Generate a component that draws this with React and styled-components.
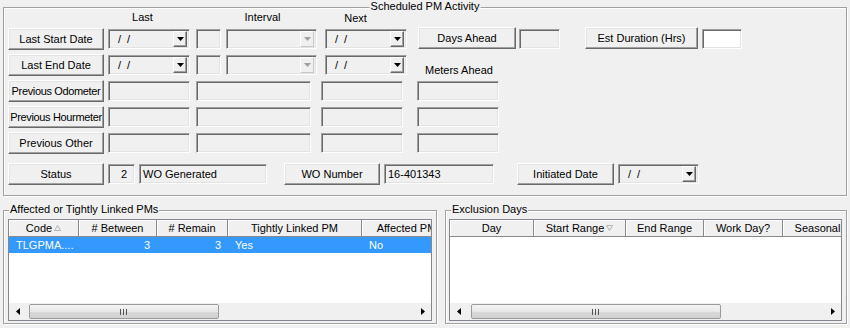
import React from "react";
import styled, { createGlobalStyle } from "styled-components";

const GlobalStyle = createGlobalStyle`
  html, body {
    margin: 0;
    padding: 0;
    background: #f0f0f0;
  }
  body {
    font-family: "Liberation Sans", Arial, sans-serif;
    font-size: 11px;
    color: #000;
  }
  * {
    box-sizing: border-box;
  }
`;

const affectedCols = [
  { label: "Code", w: 70, sort: "up" },
  { label: "# Between", w: 78 },
  { label: "# Remain", w: 71 },
  { label: "Tightly Linked PM", w: 134 },
  { label: "Affected PM", w: 90 },
];

const exclusionCols = [
  { label: "Day", w: 84 },
  { label: "Start Range", w: 92, sort: "down" },
  { label: "End Range", w: 78 },
  { label: "Work Day?", w: 79 },
  { label: "Seasonal", w: 70 },
];

const affectedRows = [
  [
    { text: "TLGPMA....", align: "left" },
    { text: "3", align: "right" },
    { text: "3", align: "right" },
    { text: "Yes", align: "left" },
    { text: "No", align: "left" },
  ],
];

function Arrow({ dir, disabled }) {
  // little windows style triangle
  const pts = {
    down: "0,0 7,0 3.5,4",
    left: "4,0 4,7 0,3.5",
    right: "0,0 0,7 4,3.5",
  }[dir];
  const size = dir === "down" ? [7, 4] : [4, 7];
  return (
    <svg width={size[0]} height={size[1]} viewBox={`0 0 ${size[0]} ${size[1]}`}>
      <polygon points={pts} fill={disabled ? "#a0a0a0" : "#000"} />
    </svg>
  );
}

function SortMark({ dir }) {
  const pts = dir === "up" ? "0.5,5.5 6.5,5.5 3.5,0.5" : "0.5,0.5 6.5,0.5 3.5,5.5";
  return (
    <svg width="7" height="6" viewBox="0 0 7 6">
      <polygon points={pts} fill="none" stroke="#b4b4b4" strokeWidth="1" />
    </svg>
  );
}

function Grip() {
  return (
    <svg width="8" height="6" viewBox="0 0 8 6">
      <rect x="0" y="0" width="1" height="6" fill="#555" />
      <rect x="3" y="0" width="1" height="6" fill="#555" />
      <rect x="6" y="0" width="1" height="6" fill="#555" />
    </svg>
  );
}

function ComboBox({ w, ml, value, disabled }) {
  return (
    <Combo $w={w} $ml={ml}>
      <ComboText>{value}</ComboText>
      <DropBtn $disabled={disabled}>
        <Arrow dir="down" disabled={disabled} />
      </DropBtn>
    </Combo>
  );
}

function ListGrid({ cols, rows, thumbLeft, thumbWidth }) {
  return (
    <ListView>
      <ListHead>
        {cols.map((c) => (
          <HeadCell key={c.label} $w={c.w}>
            {c.label}
            {c.sort && <SortMark dir={c.sort} />}
          </HeadCell>
        ))}
      </ListHead>
      <ListBody>
        {rows.map((r, i) => (
          <ListRow key={i} $selected={i === 0}>
            {r.map((cell, j) => (
              <Cell key={j} $w={cols[j].w} $align={cell.align}>
                {cell.text}
              </Cell>
            ))}
          </ListRow>
        ))}
      </ListBody>
      <ScrollBar>
        <ScrollArrow>
          <Arrow dir="left" />
        </ScrollArrow>
        <Track>
          <Thumb $ml={thumbLeft} $w={thumbWidth}>
            <Grip />
          </Thumb>
        </Track>
        <ScrollArrow>
          <Arrow dir="right" />
        </ScrollArrow>
      </ScrollBar>
    </ListView>
  );
}

export default function App() {
  return (
    <>
      <GlobalStyle />
      <Page>
        <Group $pad="3px 4px 10px 4px" $mt={7}>
          <GroupTitle $center>Scheduled PM Activity</GroupTitle>

          <CaptionRow>
            <Caption $col={2}>Last</Caption>
            <Caption $col={4}>Interval</Caption>
            <Caption $col={5} $nudge={1}>Next</Caption>
          </CaptionRow>

          <Row $mt={0}>
            <Btn $w={96}>Last Start Date</Btn>
            <ComboBox w={82} ml={4} value="/ /" />
            <Field $w={25} $ml={6} />
            <ComboBox w={91} ml={5} value="" disabled />
            <ComboBox w={82} ml={8} value="/ /" />
            <Btn $w={98} $ml={11} $up>Days Ahead</Btn>
            <Field $w={41} $ml={3} />
            <Btn $w={113} $ml={25} $up>Est Duration (Hrs)</Btn>
            <Field $w={40} $ml={4} $white />
          </Row>

          <Row>
            <Btn $w={96}>Last End Date</Btn>
            <ComboBox w={82} ml={4} value="/ /" />
            <Field $w={25} $ml={6} />
            <ComboBox w={91} ml={5} value="" disabled />
            <ComboBox w={82} ml={8} value="/ /" />
            <SideLabel>Meters Ahead</SideLabel>
          </Row>

          {["Previous Odometer", "Previous Hourmeter", "Previous Other"].map((name) => (
            <Row key={name}>
              <Btn $w={96} $tight={name !== "Previous Other"}>
                {name}
              </Btn>
              <Field $w={82} $ml={4} />
              <Field $w={115} $ml={6} />
              <Field $w={82} $ml={10} />
              <Field $w={82} $ml={14} />
            </Row>
          ))}

          <Row $mt={9}>
            <Btn $w={96}>Status</Btn>
            <Field $w={27} $ml={4} $right>
              2
            </Field>
            <Field $w={128} $ml={4}>
              WO Generated
            </Field>
            <Btn $w={96} $ml={17}>WO Number</Btn>
            <Field $w={110} $ml={4}>
              16-401343
            </Field>
            <Btn $w={97} $ml={23}>Initiated Date</Btn>
            <ComboBox w={81} ml={4} value="/ /" />
          </Row>
        </Group>

        <LowerRow>
          <Group $w={434} $pad="8px 4px 2px 4px">
            <GroupTitle>Affected or Tightly Linked PMs</GroupTitle>
            <ListGrid cols={affectedCols} rows={affectedRows} thumbLeft={3} thumbWidth={190} />
          </Group>
          <Group $pad="8px 4px 2px 3px" $grow>
            <GroupTitle>Exclusion Days</GroupTitle>
            <ListGrid cols={exclusionCols} rows={[]} thumbLeft={4} thumbWidth={250} />
          </Group>
        </LowerRow>
      </Page>
    </>
  );
}

const Page = styled.div`
  width: 850px;
  height: 328px;
  padding: 0 3px;
  overflow: hidden;
`;

const Group = styled.div`
  position: relative;
  width: ${(p) => (p.$w ? `${p.$w}px` : "auto")};
  flex: ${(p) => (p.$grow ? 1 : "none")};
  min-width: 0;
  margin-top: ${(p) => p.$mt || 0}px;
  padding: ${(p) => p.$pad};
  border: 1px solid #a0a0a0;
  box-shadow: inset 1px 1px 0 #fff, 1px 1px 0 #fff;
`;

const GroupTitle = styled.span`
  position: absolute;
  top: -8px;
  left: ${(p) => (p.$center ? "50%" : "5px")};
  transform: ${(p) => (p.$center ? "translateX(-50%)" : "none")};
  padding: 0 1px;
  line-height: 13px;
  background: #f0f0f0;
  white-space: nowrap;
`;

const CaptionRow = styled.div`
  display: grid;
  grid-template-columns: 100px 82px 31px 96px 90px;
  height: 17px;
  line-height: 12px;
`;

const Caption = styled.div`
  grid-column: ${(p) => p.$col};
  grid-row: 1;
  text-align: center;
  padding-right: 13px;
  margin-top: ${(p) => p.$nudge || 0}px;
`;

const Row = styled.div`
  display: flex;
  align-items: center;
  height: 22px;
  margin-top: ${(p) => (p.$mt !== undefined ? p.$mt : 4)}px;
`;

const Btn = styled.div`
  flex: none;
  width: ${(p) => p.$w}px;
  height: 22px;
  margin-left: ${(p) => p.$ml || 0}px;
  margin-top: ${(p) => (p.$up ? "-2px" : "0")};
  display: flex;
  align-items: center;
  justify-content: center;
  background: #f0f0f0;
  border: 1px solid;
  border-color: #fff #696969 #696969 #fff;
  box-shadow: inset -1px -1px 0 #a0a0a0, inset 1px 1px 0 #e3e3e3;
  white-space: nowrap;
  overflow: hidden;
  letter-spacing: ${(p) => (p.$tight ? "-0.35px" : "0")};
`;

const Field = styled.div`
  flex: none;
  width: ${(p) => p.$w}px;
  height: 20px;
  margin-left: ${(p) => p.$ml || 0}px;
  display: flex;
  align-items: center;
  justify-content: ${(p) => (p.$right ? "flex-end" : "flex-start")};
  padding: ${(p) => (p.$right ? "0 7px 0 2px" : "0 2px 0 3px")};
  background: ${(p) => (p.$white ? "#fff" : "#f0f0f0")};
  border: 1px solid;
  border-color: #a0a0a0 #fff #fff #a0a0a0;
  box-shadow: inset 1px 1px 0 #696969, inset -1px -1px 0 #e3e3e3;
  white-space: nowrap;
`;

const Combo = styled(Field)`
  padding: 0 2px 0 0;
`;

const ComboText = styled.span`
  flex: 1;
  padding-left: 9px;
  word-spacing: 3px;
`;

const DropBtn = styled.div`
  flex: none;
  width: 14px;
  height: 16px;
  display: flex;
  align-items: center;
  justify-content: center;
  background: #f0f0f0;
  border: 1px solid;
  border-color: ${(p) => (p.$disabled ? "#fff #c8c8c8 #c8c8c8 #fff" : "#fff #696969 #696969 #fff")};
  box-shadow: ${(p) => (p.$disabled ? "none" : "inset -1px -1px 0 #a0a0a0")};
`;

const SideLabel = styled.div`
  align-self: flex-end;
  margin-left: 18px;
  line-height: 12px;
  white-space: nowrap;
`;

const LowerRow = styled.div`
  display: flex;
  gap: 8px;
  margin-top: 14px;
`;

const ListView = styled.div`
  height: 102px;
  display: flex;
  flex-direction: column;
  background: #fff;
  border: 1px solid #828790;
  overflow: hidden;
`;

const ListHead = styled.div`
  flex: none;
  display: flex;
  height: 17px;
`;

const HeadCell = styled.div`
  flex: none;
  width: ${(p) => p.$w}px;
  display: flex;
  align-items: center;
  justify-content: center;
  gap: 2px;
  background: #f0f0f0;
  border-right: 1px solid #8a8a8a;
  border-bottom: 1px solid #8a8a8a;
  box-shadow: inset 1px 1px 0 #fff;
  white-space: nowrap;
`;

const ListBody = styled.div`
  flex: 1;
  overflow: hidden;
`;

const ListRow = styled.div`
  display: flex;
  height: 16px;
  min-width: 100%;
  width: max-content;
  background: ${(p) => (p.$selected ? "#3399ff" : "transparent")};
  color: ${(p) => (p.$selected ? "#fff" : "#000")};
`;

const Cell = styled.div`
  flex: none;
  width: ${(p) => p.$w}px;
  line-height: 16px;
  padding: 0 7px;
  text-align: ${(p) => p.$align};
  white-space: nowrap;
  overflow: hidden;
`;

const ScrollBar = styled.div`
  flex: none;
  display: flex;
  height: 17px;
  background: #f0f0f0;
`;

const ScrollArrow = styled.div`
  flex: none;
  width: 17px;
  display: flex;
  align-items: center;
  justify-content: center;
`;

const Track = styled.div`
  flex: 1;
  display: flex;
  align-items: center;
`;

const Thumb = styled.div`
  width: ${(p) => p.$w}px;
  height: 15px;
  margin-left: ${(p) => p.$ml}px;
  display: flex;
  align-items: center;
  justify-content: center;
  border: 1px solid #9b9b9b;
  border-radius: 2px;
  background: linear-gradient(#f4f4f4, #e8e8e8 50%, #d9d9d9 51%, #d2d2d2);
`;
